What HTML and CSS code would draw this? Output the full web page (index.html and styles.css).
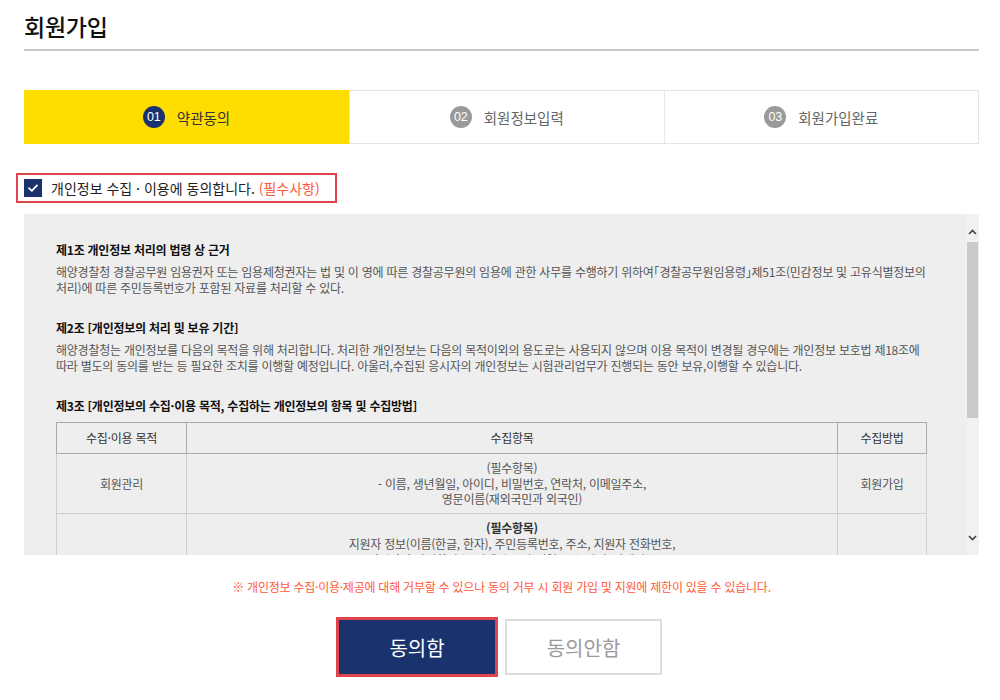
FILE: index.html
```html
<!DOCTYPE html>
<html lang="ko">
<head>
<meta charset="utf-8">
<title>회원가입</title>
<link rel="stylesheet" href="styles.css">
</head>
<body>
<div class="page">
  <h1 class="title">회원가입</h1>

  <ol class="steps">
    <li class="step active"><span class="num">01</span><span class="step-name">약관동의</span></li>
    <li class="step"><span class="num">02</span><span class="step-name">회원정보입력</span></li>
    <li class="step"><span class="num">03</span><span class="step-name">회원가입완료</span></li>
  </ol>

  <label class="agree-check">
    <span class="box"><svg viewBox="0 0 18 18" width="18" height="18"><path d="M5 9.2 L7.8 11.8 L13 6.4" fill="none" stroke="#fff" stroke-width="1.8" stroke-linecap="round" stroke-linejoin="round"/></svg></span>
    <span class="check-text">개인정보 수집 · 이용에 동의합니다. <span class="req">(필수사항)</span></span>
  </label>

  <div class="terms">
    <div class="terms-body">
      <h3 class="art">제1조 개인정보 처리의 법령 상 근거</h3>
      <p class="art-text">해양경찰청 경찰공무원 임용권자 또는 임용제청권자는 법 및 이 영에 따른 경찰공무원의 임용에 관한 사무를 수행하기 위하여<span class="bk">「</span>경찰공무원임용령<span class="bk">」</span>제51조(민감정보 및 고유식별정보의<br>처리)에 따른 주민등록번호가 포함된 자료를 처리할 수 있다.</p>

      <h3 class="art">제2조 [개인정보의 처리 및 보유 기간]</h3>
      <p class="art-text">해양경찰청는 개인정보를 다음의 목적을 위해 처리합니다. 처리한 개인정보는 다음의 목적이외의 용도로는 사용되지 않으며 이용 목적이 변경될 경우에는 개인정보 보호법 제18조에<br>따라 별도의 동의를 받는 등 필요한 조치를 이행할 예정입니다. 아울러,수집된 응시자의 개인정보는 시험관리업무가 진행되는 동안 보유,이행할 수 있습니다.</p>

      <h3 class="art">제3조 [개인정보의 수집·이용 목적, 수집하는 개인정보의 항목 및 수집방법]</h3>
      <table class="items">
        <thead>
          <tr><th class="c1">수집·이용 목적</th><th class="c2">수집항목</th><th class="c3">수집방법</th></tr>
        </thead>
        <tbody>
          <tr>
            <td>회원관리</td>
            <td>(필수항목)<br>- 이름, 생년월일, 아이디, 비밀번호, 연락처, 이메일주소,<br>영문이름(재외국민과 외국인)</td>
            <td>회원가입</td>
          </tr>
          <tr class="top">
            <td></td>
            <td><strong class="sub">(필수항목)</strong><br>지원자 정보(이름(한글, 한자), 주민등록번호, 주소, 지원자 전화번호,<br>지원자 휴대전화번호, 이메일주소) 병역구분, 사진, 장애여부</td>
            <td></td>
          </tr>
        </tbody>
      </table>
    </div>
    <div class="scrollbar">
      <span class="arrow"><svg viewBox="0 0 9 6" width="9" height="6"><path d="M1 5 L4.5 1.5 L8 5" fill="none" stroke="#444" stroke-width="1.6"/></svg></span>
      <span class="track"><span class="thumb"></span></span>
      <span class="arrow"><svg viewBox="0 0 9 6" width="9" height="6"><path d="M1 1 L4.5 4.5 L8 1" fill="none" stroke="#444" stroke-width="1.6"/></svg></span>
    </div>
  </div>

  <p class="notice">※ 개인정보 수집·이용·제공에 대해 거부할 수 있으나 동의 거부 시 회원 가입 및 지원에 제한이 있을 수 있습니다.</p>

  <div class="buttons">
    <button class="btn btn-agree" type="button">동의함</button>
    <button class="btn btn-disagree" type="button">동의안함</button>
  </div>
</div>
</body>
</html>
```

FILE: styles.css
```css
* { box-sizing: border-box; }

html, body {
  margin: 0;
  padding: 0;
  background: #fff;
}

body {
  font-family: "Noto Sans CJK KR", "Noto Sans", sans-serif;
  color: #333;
  letter-spacing: 0;
}

.page {
  width: 1000px;
  padding: 0 21px 0 24px;
}

.title {
  margin: 0;
  padding: 11px 0 8px;
  font-size: 23px;
  line-height: 30px;
  font-weight: 500;
  color: #111;
  border-bottom: 2px solid #c8c8c8;
  letter-spacing: -0.01em;
}

.steps {
  list-style: none;
  margin: 39px 0 0;
  padding: 0;
  display: grid;
  grid-template-columns: 324px 1fr 1fr;
  height: 54px;
  border: 1px solid #e4e4e4;
}

.step {
  display: flex;
  align-items: center;
  justify-content: center;
  gap: 12px;
  border-left: 1px solid #e8e8e8;
  font-size: 14.5px;
  color: #666;
}

.step:first-child { border-left: 0; }

.step.active {
  background: #ffdd00;
  color: #333;
  margin: -1px 0 -1px -1px;
}

.num {
  width: 22px;
  height: 22px;
  border-radius: 50%;
  background: #9a9a9a;
  color: #fff;
  font-family: "Liberation Sans", Arial, sans-serif;
  font-size: 12.5px;
  letter-spacing: -0.02em;
  display: flex;
  align-items: center;
  justify-content: center;
}

.active .num { background: #1a336f; }

.agree-check {
  display: inline-flex;
  align-items: center;
  gap: 9px;
  margin: 29px 0 0 -8px;
  height: 30px;
  padding: 0 15px 0 6px;
  border: 2px solid #e0444c;
  font-size: 14px;
  color: #222;
}

.box {
  width: 18px;
  height: 18px;
  background: #1a336f;
  display: flex;
}

.req { color: #ff5a3a; }

.terms {
  margin-top: 11px;
  height: 341px;
  background: #eeeeee;
  display: flex;
}

.terms-body {
  flex: 1;
  overflow: hidden;
  padding: 28px 0 0 32px;
  font-size: 12px;
  line-height: 16px;
  letter-spacing: -0.02em;
}

.art {
  margin: 0 0 6px;
  font-size: 12px;
  line-height: 16px;
  font-weight: 700;
  color: #111;
}

.art-text {
  margin: 0 0 24px;
  color: #555;
  white-space: nowrap;
}

.bk { font-feature-settings: "halt"; }

.items {
  margin-top: 8px;
  width: 871px;
  border-collapse: collapse;
  text-align: center;
  color: #555;
  white-space: nowrap;
}

.items th {
  height: 31px;
  font-weight: 400;
  color: #333;
  border: 1px solid #aaa;
  padding: 0;
}

.items .c1 { width: 130px; }
.items .c3 { width: 89px; }

.items td {
  border: 1px solid #cfcfcf;
  border-top: 0;
  height: 60px;
  padding: 6px 0;
  line-height: 15.5px;
  vertical-align: middle;
}

.items tr.top td {
  vertical-align: top;
  line-height: 16px;
}

.sub { color: #333; font-weight: 700; }

.scrollbar {
  width: 13px;
  background: #f1f1f1;
  display: flex;
  flex-direction: column;
  align-items: center;
  padding: 13px 0 12px;
}

.arrow {
  display: flex;
  height: 10px;
  align-items: center;
}

.track {
  flex: 1;
  width: 100%;
  padding: 5px 1px 0;
}

.thumb {
  display: block;
  height: 176px;
  background: #c9c9c9;
}

.notice {
  margin: 24px 0 0;
  text-align: center;
  font-size: 12px;
  line-height: 16px;
  color: #ff5a3a;
  letter-spacing: -0.02em;
}

.buttons {
  display: flex;
  justify-content: center;
  align-items: center;
  gap: 7px;
  margin-top: 22px;
  padding-right: 5px;
}

.btn {
  font-family: "Noto Sans CJK KR", sans-serif;
  font-size: 20px;
  letter-spacing: 0;
  cursor: pointer;
  padding: 0;
}

.btn-agree {
  width: 162px;
  height: 60px;
  background: #1a336f;
  color: #fff;
  border: 3px solid #e0444c;
}

.btn-disagree {
  width: 157px;
  height: 56px;
  background: #fff;
  color: #9a9a9a;
  border: 2px solid #dcdcdc;
}
```
